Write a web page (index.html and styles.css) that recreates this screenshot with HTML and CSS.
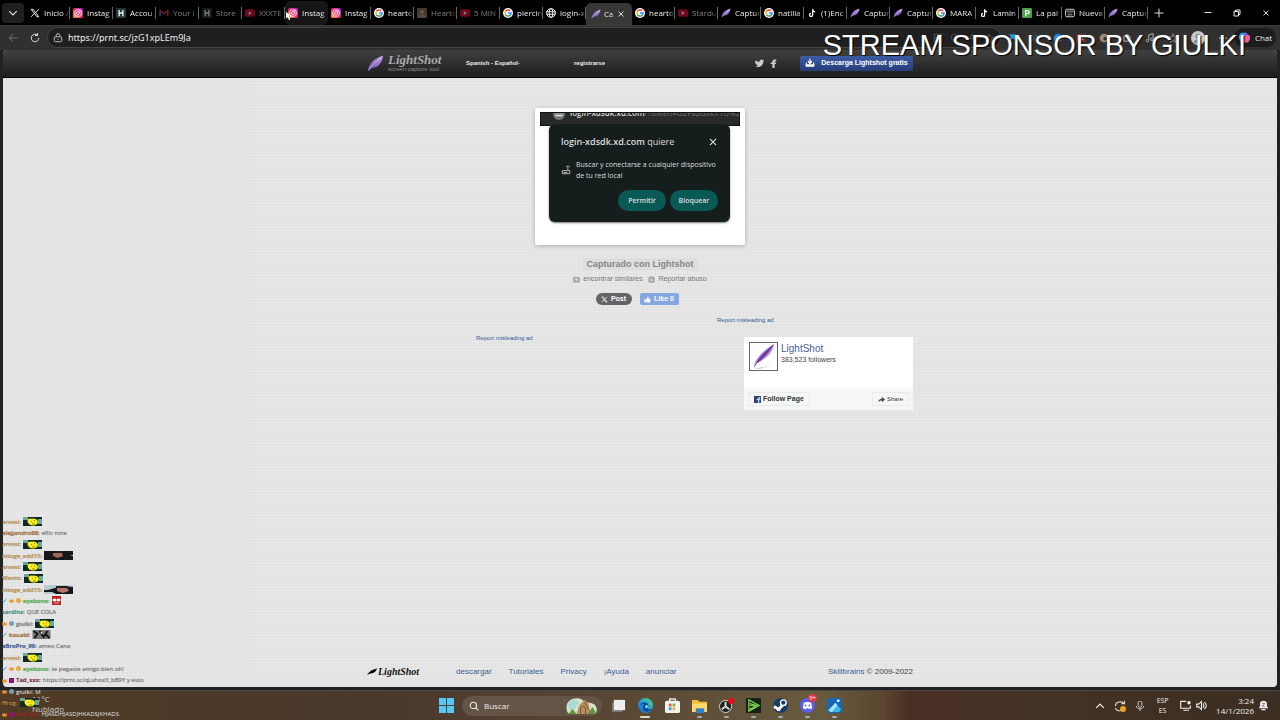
FILE: index.html
```html
<!DOCTYPE html>
<html lang="es">
<head>
    <meta charset="UTF-8">
    <meta name="viewport" content="width=device-width, initial-scale=1.0">
    <title>Captura Lightshot</title>
    <link rel="stylesheet" href="styles.css">
</head>
<body>
    <!-- Shared icons -->
    <svg class="sprite" aria-hidden="true">
        <defs>
            <linearGradient id="igGrad" x1="0" y1="1" x2="1" y2="0">
                <stop offset="0" stop-color="#ffb13b"/>
                <stop offset=".45" stop-color="#f5265f"/>
                <stop offset="1" stop-color="#a62be0"/>
            </linearGradient>
            <linearGradient id="featherGrad" x1="0" y1="1" x2="1" y2="0">
                <stop offset="0" stop-color="#6a4aa8"/>
                <stop offset=".6" stop-color="#9a7acc"/>
                <stop offset="1" stop-color="#c9a8e8"/>
            </linearGradient>
            <linearGradient id="edgeGrad" x1="0" y1="1" x2="1" y2="0">
                <stop offset="0" stop-color="#1263c6"/>
                <stop offset=".5" stop-color="#23a5dd"/>
                <stop offset="1" stop-color="#56d36b"/>
            </linearGradient>
        </defs>
        <symbol id="x" viewBox="0 0 16 16"><path d="M2 2h3l9 12h-3zM14 2L9 7.500M2 14l5-5.500" fill="none" stroke="currentColor" stroke-width="1.600"/></symbol>
        <symbol id="instagram" viewBox="0 0 16 16"><rect width="16" height="16" rx="3" fill="url(#igGrad)"/><g fill="none" stroke="#fff" stroke-width="1.400"><rect x="3" y="3" width="10" height="10" rx="3"/><circle cx="8" cy="8" r="2.400"/></g><circle cx="11" cy="5" r=".8" fill="#fff"/></symbol>
        <symbol id="hearto" viewBox="0 0 16 16"><rect width="16" height="16" rx="2" fill="#26393d"/><path d="M5 3v10M11 3v10M5 9l6-2" stroke="#fff" stroke-width="2" fill="none"/></symbol>
        <symbol id="gmail" viewBox="0 0 16 16"><path d="M2 13V4l6 5 6-5v9" fill="none" stroke="#d43b30" stroke-width="2.500"/><path d="M2 13V5" stroke="#3d74d8" stroke-width="2.500"/></symbol>
        <symbol id="youtube" viewBox="0 0 16 16"><rect y="2" width="16" height="12" rx="3" fill="#e0103a"/><path d="M6 5l5 3-5 3z" fill="#fff"/></symbol>
        <symbol id="google" viewBox="0 0 16 16"><circle cx="8" cy="8" r="8" fill="#fff"/><g fill="none" stroke-width="2.400"><path d="M11.500 4.500A5 5 0 0 0 3.800 5.500" stroke="#ea4335"/><path d="M3.800 5.500a5 5 0 0 0 0 5" stroke="#fbbc05"/><path d="M3.800 10.500a5 5 0 0 0 7.500 1.200" stroke="#34a853"/><path d="M11.300 11.700A5 5 0 0 0 13 8H8" stroke="#4285f4"/></g></symbol>
        <symbol id="photo" viewBox="0 0 16 16"><rect width="16" height="16" rx="2" fill="#8e735e"/><circle cx="8" cy="6" r="3" fill="#cbb29c"/><path d="M2 15c1-6 11-6 12 0" fill="#b09884"/></symbol>
        <symbol id="globe" viewBox="0 0 16 16"><g fill="none" stroke="#fff" stroke-width="1.500"><circle cx="8" cy="8" r="7"/><ellipse cx="8" cy="8" rx="3" ry="7"/><path d="M1 6h14M1 10h14"/></g></symbol>
        <symbol id="feather" viewBox="0 0 20 20"><path d="M1 19C2 10 8 4 19 1c-1 6-3 9-6 12-3 2-6 2-9 3z" fill="url(#featherGrad)"/><path d="M2 18C6 12 10 8 17 3" stroke="#e6daf5" stroke-width=".8" fill="none"/></symbol>
        <symbol id="feather-dark" viewBox="0 0 20 20"><path d="M0 16C4 9 10 5 20 3c-1 5-4 7-8 9-3 1-6 1-8 2z"/></symbol>
        <symbol id="tiktok" viewBox="0 0 16 16"><path d="M9 2v9a2.500 2.500 0 1 1-2.500-2.500M9 2c0 3 2 4 4 4" fill="none" stroke="#fff" stroke-width="2"/></symbol>
        <symbol id="parking" viewBox="0 0 16 16"><rect width="16" height="16" rx="2" fill="#4aa24a"/><path d="M6 13V4h3a2.500 2.500 0 0 1 0 5H6" fill="none" stroke="#fff" stroke-width="2"/></symbol>
        <symbol id="newtab" viewBox="0 0 16 16"><rect x="1" y="2" width="14" height="12" rx="2" fill="none" stroke="#ddd" stroke-width="1.500"/><path d="M2 5h12M4 8h2M7 8h2M10 8h2M4 11h8" stroke="#ddd" stroke-width="1.200"/></symbol>
        <symbol id="close" viewBox="0 0 16 16"><path d="M3 3l10 10M13 3L3 13" stroke="currentColor" stroke-width="1.800"/></symbol>
        <symbol id="crown" viewBox="0 0 16 16"><path d="M1 3l4 4 3-5 3 5 4-4v11H1z" fill="#f29424"/></symbol>
        <symbol id="emote" viewBox="0 0 19 9"><rect width="19" height="9" fill="#132b26"/><path d="M0 0h5v3H0zM15 2h4v5h-4z" fill="#6da79a"/><ellipse cx="10" cy="5" rx="5" ry="3.500" fill="#f4ec16"/><circle cx="7" cy="4" r="2.500" fill="#f8ef28"/><path d="M11 3l1 1M8 4l1 1M9 7h3" stroke="#8a7000" stroke-width=".8"/></symbol>
        <symbol id="emote-face" viewBox="0 0 29 9"><rect width="29" height="9" fill="#15171b"/><path d="M9 2h9l1 3-5 2-5-2z" fill="#a2655b"/><path d="M10 0h9v2h-9z" fill="#261c1b"/><path d="M26 5l3-1v1z" fill="#ddd"/></symbol>
        <symbol id="emote-side" viewBox="0 0 29 9"><rect width="29" height="9" fill="#15171b"/><path d="M0 0h29v2L18 1 4 5H0zM0 7h8l4 2H0z" fill="#b7cbd5"/><path d="M13 3h10l2 3-6 2-6-2z" fill="#b87569"/><path d="M12 1h12v2H12z" fill="#261c1b"/></symbol>
        <symbol id="emote-gray" viewBox="0 0 18 9"><rect width="18" height="9" fill="#777"/><path d="M1 1l4 3-3 4M7 1l4 6 4-6M13 4l4 4" stroke="#181818" stroke-width="2" fill="none"/><circle cx="9" cy="3" r="1" fill="#ddd"/></symbol>
        <symbol id="emote-red" viewBox="0 0 9 9"><rect width="9" height="9" fill="#b82224"/><path d="M1 3h3v2H1zM5 3h3v2H5zM2 7h5" fill="#fff" stroke="#fff" stroke-width=".6"/></symbol>
        <symbol id="check" viewBox="0 0 16 16"><path d="M2 8l4 5L14 2" stroke="#38a1d8" stroke-width="3" fill="none"/></symbol>
    </svg>

    <div class="screen">
        <!-- Browser tabs -->
        <div class="tab-bar">
            <button class="tab-menu" aria-label="Buscar pestañas"><svg viewBox="0 0 16 16"><path d="M2 5l6 6 6-6" fill="none" stroke="#ddd" stroke-width="2"/></svg></button>
            <nav class="tabs">
                <a href="#" class="tab"><svg><use href="#x"/></svg><span>Inicio /</span></a>
                <a href="#" class="tab"><svg><use href="#instagram"/></svg><span>Instag</span></a>
                <a href="#" class="tab"><svg><use href="#hearto"/></svg><span>Accou</span></a>
                <a href="#" class="tab muted"><svg><use href="#gmail"/></svg><span>Your I</span></a>
                <a href="#" class="tab muted"><svg><use href="#hearto"/></svg><span>Store |</span></a>
                <a href="#" class="tab muted"><svg><use href="#youtube"/></svg><span>XXXTE</span></a>
                <a href="#" class="tab hovered"><svg><use href="#instagram"/></svg><span>Instag</span></a>
                <a href="#" class="tab"><svg><use href="#instagram"/></svg><span>Instag</span></a>
                <a href="#" class="tab"><svg><use href="#google"/></svg><span>hearto</span></a>
                <a href="#" class="tab muted"><svg><use href="#photo"/></svg><span>Hearto</span></a>
                <a href="#" class="tab muted"><svg><use href="#youtube"/></svg><span>5 MIN</span></a>
                <a href="#" class="tab"><svg><use href="#google"/></svg><span>piercin</span></a>
                <a href="#" class="tab"><svg><use href="#globe"/></svg><span>login-x</span></a>
                <a href="#" class="tab active"><svg><use href="#feather"/></svg><span>Ca</span><svg class="tab-close"><use href="#close"/></svg></a>
                <a href="#" class="tab"><svg><use href="#google"/></svg><span>hearto</span></a>
                <a href="#" class="tab muted"><svg><use href="#youtube"/></svg><span>Stardu</span></a>
                <a href="#" class="tab"><svg><use href="#feather"/></svg><span>Captur</span></a>
                <a href="#" class="tab"><svg><use href="#google"/></svg><span>natilla</span></a>
                <a href="#" class="tab"><svg><use href="#tiktok"/></svg><span>(1)Enc</span></a>
                <a href="#" class="tab"><svg><use href="#feather"/></svg><span>Captur</span></a>
                <a href="#" class="tab"><svg><use href="#feather"/></svg><span>Captur</span></a>
                <a href="#" class="tab"><svg><use href="#google"/></svg><span>MARA</span></a>
                <a href="#" class="tab"><svg><use href="#tiktok"/></svg><span>Lamin</span></a>
                <a href="#" class="tab"><svg><use href="#parking"/></svg><span>La pal</span></a>
                <a href="#" class="tab"><svg><use href="#newtab"/></svg><span>Nueva</span></a>
                <a href="#" class="tab"><svg><use href="#feather"/></svg><span>Captur</span></a>
            </nav>
            <button class="new-tab" aria-label="Nueva pestaña"><svg viewBox="0 0 16 16"><path d="M8 1v14M1 8h14" stroke="#ddd" stroke-width="1.600"/></svg></button>
            <div class="window-buttons">
                <button aria-label="Minimizar"><svg viewBox="0 0 16 16"><path d="M1 7h14" stroke="#eee" stroke-width="2"/></svg></button>
                <button aria-label="Restaurar"><svg viewBox="0 0 16 16"><path d="M2 5h9v9H2zM5 5V2h9v9h-3" fill="none" stroke="#eee" stroke-width="2"/></svg></button>
                <button aria-label="Cerrar"><svg><use href="#close"/></svg></button>
            </div>
        </div>

        <!-- Address bar -->
        <div class="toolbar">
            <button class="tool back" aria-label="Atrás"><svg viewBox="0 0 16 16"><path d="M15 8H2M8 2L2 8l6 6" fill="none" stroke="#777" stroke-width="1.500"/></svg></button>
            <button class="tool reload" aria-label="Actualizar"><svg viewBox="0 0 16 16"><path d="M14 8a6 6 0 1 1-2-4.500M12 0v4H8" fill="none" stroke="#ddd" stroke-width="1.600"/></svg></button>
            <div class="address">
                <svg viewBox="0 0 16 16"><rect x="2" y="6" width="12" height="8" rx="2" fill="none" stroke="#bbb" stroke-width="1.600"/><path d="M5 6V4a3 3 0 0 1 6 0v2M8 9v2" fill="none" stroke="#bbb" stroke-width="1.600"/></svg>
                <input type="text" value="https://prnt.sc/jzG1xpLEm9Ja" aria-label="Dirección">
                <svg class="dim" viewBox="0 0 16 16"><path d="M2 2h5v5H2zM9 2h5v5H9zM2 9h5v5H2zM11 9v5M9 11h5" fill="none" stroke="#888"/></svg>
                <svg class="dim" viewBox="0 0 16 16"><circle cx="7" cy="7" r="5" fill="none" stroke="#888"/><path d="M11 11l4 4" stroke="#888"/></svg>
                <svg class="dim" viewBox="0 0 16 16"><path d="M2 13L8 2l5 11M4 9h7" fill="none" stroke="#888"/></svg>
                <svg class="dim" viewBox="0 0 16 16"><path d="M8 1l2 5 5 1-4 3 1 5-4-3-4 3 1-5-4-3 5-1z" fill="none" stroke="#888"/></svg>
            </div>
            <div class="extensions">
                <svg viewBox="0 0 16 16"><path d="M3 2h11v10L9 8l-6 6 3-8z" fill="#1b9de0"/></svg>
                <svg viewBox="0 0 16 16"><path d="M2 3l5 5-5 5M9 3l5 5-5 5" fill="none" stroke="#27657f" stroke-width="2"/></svg>
                <svg viewBox="0 0 16 16"><circle cx="8" cy="8" r="7" fill="#237fe6"/><path d="M4 9l4-4 4 4" fill="#9bd0ff"/></svg>
                <svg viewBox="0 0 16 16"><rect x="1" y="2" width="14" height="12" rx="2" fill="#8e3038"/><path d="M4 11l4-6 4 6" fill="#ccc"/></svg>
                <svg viewBox="0 0 16 16"><circle cx="8" cy="8" r="7" fill="#a6866c"/><circle cx="10" cy="9" r="3" fill="#453027"/></svg>
                <svg viewBox="0 0 16 16"><path d="M3 5h3V3h4v2h3v4h-2v4H3z" fill="none" stroke="#bbb" stroke-width="1.500"/></svg>
                <svg viewBox="0 0 16 16"><path d="M6 12V3l7-2v9M6 12a2 2 0 1 1-2-2M13 10a2 2 0 1 1-2-2" fill="none" stroke="#bbb" stroke-width="1.500"/></svg>
                <svg viewBox="0 0 16 16"><path d="M8 1l2 5 5 1-4 3 1 5-4-3-4 3 1-5-4-3 5-1z" fill="none" stroke="#999" stroke-width="1.300"/></svg>
                <svg class="avatar" viewBox="0 0 16 16"><circle cx="8" cy="8" r="8" fill="#c9c9c9"/><circle cx="8" cy="6" r="3" fill="#888"/><path d="M3 14c0-6 10-6 10 0" fill="#888"/></svg>
                <svg viewBox="0 0 16 16"><path d="M2 8h2M7 8h2M12 8h2" stroke="#ccc" stroke-width="2"/></svg>
            </div>
            <button class="copilot"><svg viewBox="0 0 16 16"><path d="M4 2h6l-3 9H3C0 11 1 3 4 2z" fill="#2f9bf0"/><path d="M9 5h4c3 0 2 8-1 9H6z" fill="#f0609c"/><path d="M9 2c3 0 3 3 4 3H9L7 9z" fill="#7d55ee"/><path d="M3 11h4l-1 3c-2 0-3-1-3-3z" fill="#f4b942"/></svg>Chat</button>
        </div>

        <!-- Page -->
        <div class="page">
            <header class="site-header">
                <div class="container header-row">
                    <a href="#" class="logo">
                        <svg><use href="#feather"/></svg>
                        <span class="logo-text">LightShot<small>screen capture tool</small></span>
                    </a>
                    <select class="language" aria-label="Idioma"><option>Spanish - Español</option></select>
                    <a href="#" class="register">registrarse</a>
                    <div class="social">
                        <a href="#" aria-label="Twitter"><svg viewBox="0 0 16 16"><path d="M1 2c2 2 4 3 7 3 0-4 4-5 6-3l2-1-1 3c0 8-8 13-15 9 2 0 4 0 5-2-2 0-3-1-3-2-2-1-2-4-1-7z" fill="#ccc"/></svg></a>
                        <a href="#" aria-label="Facebook"><svg viewBox="0 0 16 16"><path d="M6 16V9H3V6h3c0-4 1-6 7-5v3c-3 0-3 0-3 2h3l-1 3h-2v7z" fill="#ccc"/></svg></a>
                    </div>
                    <button class="download"><svg viewBox="0 0 16 16"><path d="M8 1v7M5 5l3 4 3-4" fill="none" stroke="#fff" stroke-width="2"/><path d="M1 9l2-3v4h10V6l2 3v5H1z" fill="#fff"/></svg>Descarga Lightshot gratis</button>
                </div>
            </header>

            <main>
                <figure class="shot">
                    <div class="shot-bar"><svg viewBox="0 0 16 16"><circle cx="8" cy="8" r="8" fill="#777"/><path d="M3 6h10M3 10h10" stroke="#ddd" stroke-width="2"/></svg><span><b>login-xdsdk.xd.com</b>/?token=U2FsdGvkX1U%2Frc</span></div>
                    <div class="dialog">
                        <div class="dialog-title"><span><b>login-xdsdk.xd.com</b> quiere</span><button class="dialog-close" aria-label="Cerrar aviso"><svg><use href="#close"/></svg></button></div>
                        <div class="dialog-body">
                            <svg viewBox="0 0 16 16"><path d="M2 9h12v5H2zM11 9V3M8 3c2-2 4-2 6 0M4 12h6" fill="none" stroke="#bbb" stroke-width="1.500"/></svg>
                            <p>Buscar y conectarse a cualquier dispositivo de tu red local</p>
                        </div>
                        <div class="dialog-actions"><button>Permitir</button><button>Bloquear</button></div>
                    </div>
                </figure>

                <h1>Capturado con Lightshot</h1>
                <div class="shot-links">
                    <a href="#"><svg viewBox="0 0 16 16"><rect x="1" y="3" width="14" height="11" rx="2" fill="#aaa" stroke="#888"/><circle cx="8" cy="8" r="3" fill="#ddd"/></svg>encontrar similares</a>
                    <a href="#"><svg viewBox="0 0 16 16"><path d="M4 2h8v2h2v10H2V4h2z" fill="#aaa" stroke="#777"/><path d="M5 7h6M5 10h6" stroke="#ddd" stroke-width="2"/></svg>Reportar abuso</a>
                </div>
                <div class="share-row">
                    <button class="post"><svg><use href="#x"/></svg>Post</button>
                    <button class="like"><svg viewBox="0 0 16 16"><path d="M1 7h3v8H1zM5 7l3-3V1c3 0 3 3 2 5h5l-1 9H5z" fill="#fff"/></svg>Like 0</button>
                </div>

                <div class="container columns">
                    <div class="ad-left"><a href="#" class="report">Report misleading ad</a></div>
                    <aside>
                        <a href="#" class="report">Report misleading ad</a>
                        <div class="fb-box">
                            <div class="fb-top">
                                <svg class="fb-picture" viewBox="0 0 28 28"><rect width="28" height="28" fill="#fff"/><path d="M4 27l18-4-12 4z" fill="#ccc"/><path d="M4 26C4 17 14 7 25 1c-1 8-7 15-18 20z" fill="#b995dc"/><path d="M4 26C7 16 16 8 25 1 20 10 14 16 7 21z" fill="#71389f"/></svg>
                                <div><a href="#" class="fb-name">LightShot</a><p>383,523 followers</p></div>
                            </div>
                            <div class="fb-bottom">
                                <button class="follow"><svg viewBox="0 0 16 16"><rect width="16" height="16" fill="#29407c"/><path d="M9 16V9H6V6h3c0-3 2-4 5-4v3c-2 0-2 0-2 1h2v3h-2v7z" fill="#c7d2ee"/></svg>Follow Page</button>
                                <button class="share"><svg viewBox="0 0 16 16"><path d="M9 2l7 6-7 6v-4c-4 0-6 1-8 4 0-5 3-8 8-8z" fill="#444"/></svg>Share</button>
                            </div>
                        </div>
                    </aside>
                </div>
            </main>

            <footer class="container site-footer">
                <a href="#" class="footer-logo"><svg><use href="#feather-dark"/></svg>LightShot</a>
                <nav>
                    <a href="#">descargar</a>
                    <a href="#">Tutoriales</a>
                    <a href="#">Privacy</a>
                    <a href="#">¡Ayuda</a>
                    <a href="#">anunciar</a>
                </nav>
                <span><a href="#">Skillbrains</a> © 2009-2022</span>
            </footer>
        </div>

        <!-- Taskbar -->
        <div class="taskbar">
            <div class="weather"><span>11°C</span><span>Nublado</span></div>
            <div class="apps">
                <button class="app" aria-label="Inicio"><svg viewBox="0 0 16 16"><path d="M0 0h7.500v7.500H0zM8.500 0H16v7.500H8.500zM0 8.500h7.500V16H0zM8.500 8.500H16V16H8.500z" fill="#55c8f5"/></svg></button>
                <label class="search">
                    <svg viewBox="0 0 16 16"><circle cx="7" cy="7" r="5" fill="none" stroke="#eee" stroke-width="1.800"/><path d="M11 11l4 4" stroke="#eee" stroke-width="1.800"/></svg>
                    <input type="text" placeholder="Buscar" aria-label="Buscar">
                    <svg class="search-art" viewBox="0 0 32 18"><path d="M1 10C1 2 12-1 17 3s12 1 14 8-6 6-11 6H5C2 17 1 14 1 10z" fill="#d8e1c2"/><path d="M2 8c3-7 10-6 11-2L6 16z" fill="#a8dbd6"/><path d="M11 17l3-9 5-5 4 3 2 11z" fill="#b88f61"/><path d="M15 17v-6l3-2 2 3v5M19 5l4 8" stroke="#795434" fill="none"/><path d="M3 17l4-5 4 5zM22 17l5-7 3 5-2 2z" fill="#659240"/></svg>
                </label>
                <button class="app" aria-label="Vista de tareas"><svg viewBox="0 0 16 16"><rect x="1" y="5" width="11" height="10" fill="#777"/><rect x="3" y="2" width="12" height="11" fill="#eee"/></svg></button>
                <button class="app open current" aria-label="Edge"><svg viewBox="0 0 16 16"><circle cx="8" cy="8" r="8" fill="url(#edgeGrad)"/><path d="M2 8c2-5 9-4 9 0 0 2-1 2-1 3 1 2 4 1 5 0-2 5-10 5-10-1 0-2 1-3 2-3-2-1-4 0-5 1z" fill="#104c9f"/><path d="M8 8c2-1 3 0 2 2l-2 1z" fill="#bceeff"/></svg></button>
                <button class="app" aria-label="Microsoft Store"><svg viewBox="0 0 16 16"><path d="M5 4V1h6v3" fill="none" stroke="#ddd" stroke-width="1.500"/><rect y="3" width="16" height="13" rx="2" fill="#f3f3f3"/><path d="M4 6h3v3H4z" fill="#ee5634"/><path d="M8 6h3v3H8z" fill="#7ab83b"/><path d="M4 10h3v3H4z" fill="#329edc"/><path d="M8 10h3v3H8z" fill="#efb42f"/></svg></button>
                <button class="app open" aria-label="Explorador"><svg viewBox="0 0 16 16"><path d="M0 2h6l2 2h8v11H0z" fill="#f4bd39"/><path d="M0 6h16v9H0z" fill="#ffd969"/><path d="M4 11h9v5H4z" fill="#2c82c9"/></svg></button>
                <button class="app open" aria-label="OBS"><svg viewBox="0 0 16 16"><circle cx="7" cy="9" r="6.500" fill="#222" stroke="#ddd"/><path d="M7 9V4M7 9l4 3M7 9l-4 3" fill="none" stroke="#ddd" stroke-width="2"/><circle cx="13" cy="3" r="3.500" fill="#e60e18"/></svg></button>
                <button class="app open" aria-label="Reproductor"><svg viewBox="0 0 16 16"><rect width="16" height="16" fill="#172117"/><path d="M3 2l11 6-11 6zM4 6l7 2-7 4M4 8h6" fill="none" stroke="#78d44c" stroke-width="1.300"/></svg></button>
                <button class="app open" aria-label="Steam"><svg viewBox="0 0 16 16"><circle cx="8" cy="8" r="8" fill="#173d6b"/><path d="M1 9l5 3 5-5" fill="none" stroke="#fff" stroke-width="3"/><circle cx="11" cy="5" r="3" fill="#173d6b" stroke="#fff" stroke-width="1.500"/><circle cx="6" cy="12" r="2" fill="#fff"/></svg></button>
                <button class="app open" aria-label="Discord"><svg viewBox="0 0 16 16"><circle cx="8" cy="8" r="8" fill="#5660e8"/><path d="M4 5c3-1 5-1 8 0l1 6-3 1-1-1H7l-1 1-3-1z" fill="#fff"/><circle cx="6" cy="8" r="1" fill="#5660e8"/><circle cx="10" cy="8" r="1" fill="#5660e8"/></svg><span class="badge">9+</span></button>
                <button class="app open" aria-label="Fotos"><svg viewBox="0 0 16 16"><rect width="16" height="16" rx="3" fill="#1767b7"/><path d="M1 13L9 5l6 7-2 3H3z" fill="#39b7ef"/><path d="M2 13l7-8 2 3-6 7z" fill="#b1e7fb"/><circle cx="12" cy="3" r="1.500" fill="#fff"/></svg></button>
            </div>
            <div class="tray">
                <svg viewBox="0 0 16 16"><path d="M2 11l6-6 6 6" fill="none" stroke="#eee" stroke-width="2"/></svg>
                <svg class="tray-large" viewBox="0 0 16 16"><path d="M2 8c0-6 9-7 11-3M14 1v4h-4M9 14c-3 1-6 0-7-3" fill="none" stroke="#ddd" stroke-width="1.500"/><circle cx="12" cy="12" r="4" fill="#eda11e"/></svg>
                <svg viewBox="0 0 16 16"><rect x="5" y="0" width="6" height="10" rx="3" fill="none" stroke="#ccc" stroke-width="1.500"/><path d="M2 8c0 6 12 6 12 0M8 12v4" fill="none" stroke="#ccc" stroke-width="1.500"/></svg>
                <span class="keyboard">ESP<br>ES</span>
                <span class="devices">
                    <svg viewBox="0 0 16 16"><path d="M9 2H1v10h14V8M5 15h8" fill="none" stroke="#eee" stroke-width="1.600"/><circle cx="13" cy="4" r="2.500" fill="#eee"/></svg>
                    <svg viewBox="0 0 16 16"><path d="M1 6h3l4-4v12l-4-4H1zM10 5c2 2 2 4 0 6M12 3c4 3 4 7 0 10" fill="none" stroke="#eee" stroke-width="1.500"/></svg>
                </span>
                <span class="clock">3:24<br>14/1/2026</span>
                <svg class="bell" viewBox="0 0 16 16"><path d="M1 12l2-3V5c0-5 10-5 10 0v4l2 3zM5 13h6v2H5z" fill="#eee"/><path d="M6 5h4l-4 4h4" fill="none" stroke="#555"/></svg>
            </div>
        </div>
    </div>

    <!-- Stream overlay -->
    <div class="sponsor">STREAM SPONSOR BY GIULKI</div>
    <svg class="cursor" viewBox="0 0 10 14"><path d="M0 0v11l3-2 2 5 2-1-2-5h4z" fill="#fff"/></svg>
    <div class="chat">
        <div class="line"><b class="gold">arvesi:</b><svg class="emote"><use href="#emote"/></svg></div>
        <div class="line"><b class="brown">alejjandro88:</b><span>efilc nine</span></div>
        <div class="line"><b class="gold">arvesi:</b><svg class="emote"><use href="#emote"/></svg></div>
        <div class="line"><b class="gold">hitoge_edd15:</b><svg class="emote-wide"><use href="#emote-face"/></svg></div>
        <div class="line"><b class="gold">arvesi:</b><svg class="emote"><use href="#emote"/></svg></div>
        <div class="line"><b class="gold">Wents:</b><svg class="emote"><use href="#emote"/></svg></div>
        <div class="line"><b class="gold">hitoge_edd15:</b><svg class="emote-wide"><use href="#emote-side"/></svg></div>
        <div class="line"><svg class="mark"><use href="#check"/></svg><svg class="mark"><use href="#crown"/></svg><i class="coin"></i><b class="green">eyebono:</b><svg class="emote-small"><use href="#emote-red"/></svg></div>
        <div class="line"><b class="teal">sardlnz:</b><span>QUE COLA</span></div>
        <div class="line"><svg class="mark"><use href="#crown"/></svg><i class="gem"></i><b class="gray">giulki:</b><svg class="emote"><use href="#emote"/></svg></div>
        <div class="line"><svg class="mark"><use href="#check"/></svg><b class="brown">kouald:</b><svg class="emote"><use href="#emote-gray"/></svg></div>
        <div class="line"><b class="blue">aBroPro_99:</b><span>ameo Cana</span></div>
        <div class="line"><b class="gold">arvesi:</b><svg class="emote"><use href="#emote"/></svg></div>
        <div class="line"><svg class="mark"><use href="#check"/></svg><svg class="mark"><use href="#crown"/></svg><i class="coin"></i><b class="green">eyebono:</b><span>te pegaste amigo bien oh!</span></div>
        <div class="line"><svg class="mark"><use href="#crown"/></svg><i class="cube"></i><b class="wine">Tad_xxx:</b><span>https://prnt.sc/qLxhox0_bB9Y y esto</span></div>
        <div class="line low"><svg class="mark"><use href="#crown"/></svg><i class="gem"></i><b class="pale">giulki:</b><span>M</span></div>
        <div class="line low"><b class="gold">ffrog:</b><svg class="emote"><use href="#emote"/></svg></div>
        <div class="line low"><svg class="mark"><use href="#crown"/></svg><i class="cube"></i><b class="red">tad_xxx:</b><span>HJASDHJASDJHKADSJKHADS</span></div>
    </div>
</body>
</html>
```
FILE: styles.css
```css
* {
    box-sizing: border-box;
}

body {
    margin: 0;
    font-family: 'Open Sans', sans-serif;
    font-size: 8px;
    line-height: 10px;
    color: #eee;
    background: #222;
    overflow: hidden;
}

a {
    text-decoration: none;
    color: inherit;
}

button,
input,
select {
    font: inherit;
    color: inherit;
    background: none;
    border: none;
    padding: 0;
    margin: 0;
}

button {
    display: flex;
    align-items: center;
    justify-content: center;
    cursor: pointer;
}

input {
    min-width: 0;
    outline: none;
}

svg {
    display: block;
    flex: none;
    width: 10px;
    height: 10px;
}

.sprite {
    position: absolute;
    width: 0;
    height: 0;
}

.screen {
    height: 100vh;
    display: flex;
    flex-direction: column;
}

/* Tabs */
.tab-bar {
    display: flex;
    align-items: center;
    height: 25px;
    background: #000;
}

.tab-menu {
    width: 22px;
    height: 20px;
    margin: 0 3px 0 2px;
    border-radius: 4px;
    background: #202020;
}

.tabs {
    display: flex;
    align-self: stretch;
    flex: 0 1 1121px;
    min-width: 0;
}

.tab {
    display: flex;
    align-items: center;
    flex: 1 1 43px;
    min-width: 0;
    gap: 4px;
    padding-left: 3px;
    margin-top: 1px;
    background: linear-gradient(#666, #666) right center / 1px 12px no-repeat;
}

.tab span {
    flex: 1;
    overflow: hidden;
    white-space: nowrap;
    mask-image: linear-gradient(90deg, #000 75%, transparent);
}

.muted svg,
.muted span {
    opacity: .5;
}

.hovered {
    background: #161616;
    border-radius: 5px;
}

.active {
    flex: 0 0 46px;
    padding: 0 7px 0 5px;
    margin-top: 3px;
    background: #373737;
    border-radius: 5px 5px 0 0;
}

.active .tab-close {
    width: 8px;
    height: 8px;
}

.active {
    gap: 3px;
}

.new-tab {
    width: 22px;
    height: 20px;
}

.window-buttons {
    display: flex;
    margin-left: auto;
}

.window-buttons button {
    width: 29px;
    height: 20px;
}

.window-buttons svg {
    width: 8px;
    height: 8px;
}

/* Address bar */
.toolbar {
    display: flex;
    align-items: center;
    height: 25px;
    padding: 0 4px 1px 2px;
    background: #303030;
    border-top: 1px solid #3c3c3c;
}

.tool {
    width: 22px;
    height: 20px;
}

.address {
    display: flex;
    align-items: center;
    flex: 1;
    gap: 7px;
    height: 21px;
    margin-left: 1px;
    padding: 0 6px 0 5px;
    border: 1px solid #444;
    border-radius: 10px;
    background: #1f1f1f;
}

.address input {
    flex: 1;
    margin-left: -2px;
    font-size: 8px;
}

.dim {
    opacity: .7;
}

.extensions {
    display: flex;
    align-items: center;
    gap: 13px;
    margin: 0 6px;
}

.avatar {
    width: 14px;
    height: 14px;
}

.copilot {
    gap: 4px;
    width: 42px;
    height: 19px;
    border-radius: 10px;
    background: #1c1c1c;
}

.copilot svg {
    width: 13px;
    height: 13px;
}

.address input {
    font-size: 9px;
    font-family: 'Noto Sans', sans-serif;
}

/* Page */
.page {
    display: flex;
    flex-direction: column;
    flex: 1;
    margin: 0 3px 3px;
    overflow: hidden;
    border-radius: 4px;
    font-family: 'Liberation Sans', sans-serif;
    color: #444;
    background-color: #e4e4e4;
    background-image:
        repeating-linear-gradient(0deg, rgba(255, 255, 255, .15) 0 1px, transparent 1px 3px),
        repeating-linear-gradient(90deg, rgba(0, 0, 0, .01) 0 1px, transparent 1px 4px);
}

.container {
    width: 100%;
    max-width: 546px;
    margin: 0 auto;
}

.site-header {
    height: 28px;
    padding-bottom: 1px;
    color: #eee;
    background: linear-gradient(#404040, #1d1d1d);
    border-bottom: 1px solid #000;
}

.header-row {
    display: flex;
    align-items: center;
    height: 100%;
}

.logo {
    display: flex;
    align-items: center;
    gap: 4px;
    width: 97px;
}

.logo svg {
    width: 17px;
    height: 19px;
}

.logo-text {
    display: flex;
    flex-direction: column;
    font-family: 'Liberation Serif', serif;
    font-size: 13px;
    line-height: 12px;
    font-weight: bold;
    font-style: italic;
    color: #aaa;
}

.logo-text small {
    font: 6px/6px 'Liberation Sans', sans-serif;
    color: #888;
}

.language {
    width: 108px;
    padding-left: 2px;
    appearance: none;
    font-size: 6px;
    font-weight: bold;
    background: linear-gradient(#777, #777) 54px center / 2px 1px no-repeat;
}

.register {
    padding: 0 2px;
    font-size: 6px;
    font-weight: bold;
}

.social {
    display: flex;
    gap: 5px;
    margin: 0 22px 0 auto;
}

.social svg {
    width: 9px;
    height: 9px;
}

.download {
    gap: 6px;
    width: 113px;
    height: 15px;
    font-size: 7px;
    font-weight: bold;
    white-space: nowrap;
    color: #fff;
    border-radius: 2px;
    background: linear-gradient(#3b5da5, #253d78);
}

main {
    display: flex;
    flex-direction: column;
    align-items: center;
    padding-top: 30px;
}

.shot {
    width: 210px;
    margin: 0;
    padding: 4px 5px 23px;
    border-radius: 2px;
    background: #fff;
    box-shadow: 0 1px 4px #aaa;
}

.shot-bar {
    display: flex;
    align-items: flex-start;
    gap: 5px;
    height: 14px;
    padding-left: 12px;
    overflow: hidden;
    white-space: nowrap;
    color: #777;
    background: #292b2b;
    border: 1px solid #111;
    font: 8px/8px 'Open Sans', sans-serif;
}

.shot-bar svg {
    width: 12px;
    height: 12px;
    margin-top: -5px;
}

.shot-bar span {
    margin-top: -4px;
}

.shot-bar b {
    font-weight: 600;
    color: #ddd;
}

.dialog {
    margin: -2px 10px 0 9px;
    padding: 12px 12px 11px;
    border-radius: 6px;
    color: #ddd;
    background: #151d1d;
    box-shadow: 0 1px 2px #777;
    font-family: 'Open Sans', sans-serif;
}

.dialog-title {
    display: flex;
    align-items: center;
    justify-content: space-between;
    font-size: 9px;
    line-height: 12px;
}

.dialog-title b {
    font-weight: 600;
}

.dialog-body {
    display: flex;
    align-items: center;
    gap: 5px;
    margin: 11px 0 9px;
    font-size: 7px;
    line-height: 11px;
}

.dialog-body p {
    margin: 0;
}

.dialog-actions {
    display: flex;
    justify-content: flex-end;
    gap: 4px;
}

.dialog-actions button {
    width: 48px;
    height: 21px;
    border-radius: 11px;
    font-size: 7px;
    font-weight: 600;
    background: #095a55;
}

h1 {
    margin: 13px 0 0;
    padding: 0 4px;
    font-size: 9px;
    line-height: 12px;
    color: #858585;
    background: #dedede;
}

.shot-links {
    display: flex;
    gap: 6px;
    margin-top: 4px;
    font-size: 7px;
    color: #777;
}

.shot-links a {
    display: flex;
    align-items: center;
    gap: 3px;
}

.shot-links svg {
    width: 7px;
    height: 7px;
}

.share-row {
    display: flex;
    gap: 8px;
    margin: 9px 6px 0 0;
    font-size: 7px;
    font-weight: bold;
    color: #fff;
}

.share-row button {
    gap: 3px;
    height: 12px;
}

.share-row svg {
    width: 7px;
    height: 7px;
}

.post {
    width: 36px;
    border-radius: 6px;
    background: #646464;
}

.like {
    width: 39px;
    border-radius: 2px;
    background: #83a8e2;
}

.columns {
    display: flex;
    justify-content: space-between;
    margin-top: 10px;
}

.ad-left {
    padding: 18px 0 0 109px;
}

.report {
    display: block;
    font-size: 6px;
    color: #315d91;
}

aside {
    width: 196px;
}

.fb-box {
    width: 169px;
    margin: 12px 0 0 auto;
    background: #fff;
}

.fb-top {
    display: flex;
    gap: 3px;
    height: 51px;
    padding: 5px;
}

.fb-picture {
    width: 29px;
    height: 29px;
    border: 1px solid #666;
}

.fb-name {
    display: block;
    font-size: 10px;
    line-height: 13px;
    color: #4a5f9b;
}

.fb-top p {
    margin: 0;
    font-size: 7px;
    color: #444;
}

.fb-bottom {
    display: flex;
    align-items: center;
    justify-content: space-between;
    height: 22px;
    padding: 0 4px;
    background: #f5f7f7;
}

.fb-bottom button {
    gap: 2px;
    height: 14px;
    padding: 0 5px;
    border: 1px solid #e9ebeb;
    color: #333;
}

.fb-bottom svg {
    width: 7px;
    height: 7px;
}

.follow {
    font-size: 7px;
    font-weight: bold;
}

.share {
    font-size: 6px;
}

.site-footer {
    display: flex;
    align-items: center;
    margin-top: auto;
    margin-bottom: 9px;
    font-size: 8px;
    line-height: 12px;
}

.site-footer a {
    color: #385f91;
}

.site-footer .footer-logo {
    display: flex;
    align-items: center;
    gap: 1px;
    width: 89px;
    font-family: 'Liberation Serif', serif;
    font-size: 10px;
    font-style: italic;
    font-weight: bold;
    color: #111;
}

.site-footer nav {
    display: flex;
    gap: 17px;
}

.site-footer > span {
    margin-left: auto;
}

/* Taskbar */
.taskbar {
    display: grid;
    grid-template-columns: 1fr auto 1fr;
    align-items: center;
    height: 30px;
    border-top: 1px solid #484848;
    background: linear-gradient(90deg, #513b24, #49382c 30%, #594634 48%, #675b3e 64%, #5b4630 69%, #4a2e23 71%, #443225 80%, #3b2e22);
}

.weather {
    display: flex;
    flex-direction: column;
    padding: 0 0 3px 32px;
    color: #ccc;
}

.apps {
    display: flex;
    align-items: center;
    gap: 11px;
    height: 100%;
}

.app {
    position: relative;
    width: 16px;
    height: 24px;
}

.app svg {
    width: 15px;
    height: 15px;
}

.open::after {
    content: '';
    position: absolute;
    bottom: 0;
    width: 5px;
    height: 2px;
    border-radius: 1px;
    background: #aaa;
}

.current::after {
    width: 10px;
    background: #e4d9c7;
}

.badge {
    position: absolute;
    top: 0;
    right: -2px;
    padding: 0 1px;
    border-radius: 4px;
    font-size: 6px;
    line-height: 8px;
    background: #d93848;
}

.search {
    display: flex;
    align-items: center;
    gap: 5px;
    width: 140px;
    height: 20px;
    margin: 0 -3px;
    padding: 0 4px 0 7px;
    border-radius: 10px;
    background: #635446;
}

.search input {
    flex: 1;
    font-size: 8px;
}

.search input::placeholder {
    color: #eee;
}

.search-art {
    width: 33px;
    height: 18px;
}

.tray {
    display: flex;
    align-items: center;
    justify-content: flex-end;
    gap: 9px;
    padding-right: 11px;
}

.tray-large {
    width: 12px;
    height: 12px;
}

.tray .bell {
    width: 11px;
    height: 11px;
    margin-left: -5px;
}

.keyboard {
    width: 17px;
    text-align: center;
    font-size: 7px;
}

.devices {
    display: flex;
    gap: 5px;
}

.devices svg {
    width: 11px;
    height: 11px;
}

.clock {
    text-align: right;
}

/* Stream overlay */
.sponsor {
    position: absolute;
    top: 29px;
    right: 34px;
    font: 29px/33px 'Liberation Sans', sans-serif;
    color: #fff;
    text-shadow: 1px 1px 1px #000;
    white-space: nowrap;
}

.cursor {
    position: absolute;
    top: 11px;
    left: 286px;
    width: 6px;
    height: 10px;
}

.chat {
    position: absolute;
    left: 2px;
    bottom: 0;
    display: grid;
    grid-auto-rows: 1fr;
    height: 204px;
    font-size: 6px;
    line-height: 10px;
    color: #777;
    text-shadow: 0 0 1px rgba(0, 0, 0, .4);
}

.chat b {
    font-weight: 600;
}

.line {
    display: flex;
    align-items: center;
    gap: 2px;
    white-space: nowrap;
}

.emote {
    width: 19px;
    height: 9px;
}

.emote-wide {
    width: 29px;
    height: 9px;
}

.emote-small {
    width: 9px;
    height: 9px;
}

.mark {
    width: 5px;
    height: 5px;
}

.coin,
.gem,
.cube {
    width: 5px;
    height: 5px;
    background: #e8a83e;
    border-radius: 3px;
}

.gem {
    background: #7d9eb4;
}

.cube {
    border-radius: 0;
    background: #8b1672;
}

.gold {
    color: #c89a4c;
}

.brown {
    color: #ad6924;
}

.green {
    color: #43b43c;
}

.teal {
    color: #369b86;
}

.gray {
    color: #887b80;
}

.blue {
    color: #24459a;
}

.wine {
    color: #7b1641;
}

.pale {
    color: #e8d8dd;
}

.red {
    color: #b32b31;
}

.low {
    color: #eee;
}
```
